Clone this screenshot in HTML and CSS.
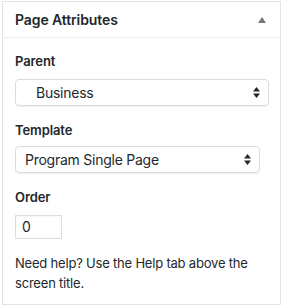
FILE: index.html
```html
<!DOCTYPE html>
<html>
<head>
<meta charset="utf-8">
<link rel="stylesheet" href="styles.css">
</head>
<body>
<div class="postbox">
  <div class="postbox-header">
    <h2 class="hndle">Page Attributes</h2>
    <span class="toggle"></span>
  </div>
  <div class="inside">
    <p class="label label-parent">Parent</p>
    <div class="select select-parent">
      <span class="value indent">Business</span>
      <svg class="arrows" width="7" height="11" viewBox="0 0 7 11"><path d="M3.5 0 L7 4.5 H0 Z M0 6.5 H7 L3.5 11 Z" fill="#23282d"/></svg>
    </div>
    <p class="label label-template">Template</p>
    <div class="select select-template">
      <span class="value">Program Single Page</span>
      <svg class="arrows" width="7" height="11" viewBox="0 0 7 11"><path d="M3.5 0 L7 4.5 H0 Z M0 6.5 H7 L3.5 11 Z" fill="#23282d"/></svg>
    </div>
    <p class="label label-order">Order</p>
    <div class="order">0</div>
    <p class="help">Need help? Use the Help tab above the screen title.</p>
  </div>
</div>
</body>
</html>
```
FILE: styles.css
```css
html, body {
  margin: 0;
  padding: 0;
  background: #fff;
}
body {
  font-family: Inter, "Liberation Sans", sans-serif;
  color: #23282d;
  font-size: 13px;
}
.postbox {
  margin: 1px 0 0 2px;
  width: 279px;
  height: 304px;
  box-sizing: border-box;
  border: 1px solid #e2e4e7;
  background: #fff;
}
.postbox-header {
  height: 35px;
  border-bottom: 1px solid #eeeeee;
  display: flex;
  align-items: center;
  justify-content: space-between;
  padding: 0 0 0 12px;
}
.hndle {
  margin: 0;
  font-size: 14px;
  font-weight: 600;
  letter-spacing: -0.1px;
}
.toggle {
  width: 0;
  height: 0;
  border-left: 4.5px solid transparent;
  border-right: 4.5px solid transparent;
  border-bottom: 6px solid #72777c;
  margin-right: 14px;
  margin-top: 1px;
}
.inside {
  padding: 0 12px;
}
.label {
  margin: 16px 0 10px;
  font-weight: 600;
  font-size: 13px;
  line-height: 16px;
  letter-spacing: -0.1px;
}
.label-parent { margin-top: 15px; }
.label-template { margin-bottom: 8px; }
.select {
  height: 27px;
  box-sizing: border-box;
  border: 1px solid #dcdcde;
  border-radius: 4px;
  box-shadow: 0 1px 1px rgba(0,0,0,0.06);
  display: flex;
  align-items: center;
  justify-content: space-between;
  padding: 0 8px 0 9px;
  font-size: 14px;
  letter-spacing: -0.25px;
}
.select-parent { width: 254px; }
.select-template { width: 245px; }
.value.indent { padding-left: 11px; }
.arrows { display: block; }
.order {
  width: 47px;
  height: 24px;
  box-sizing: border-box;
  border: 1px solid #dddddd;
  padding: 0 6px;
  font-size: 14px;
  line-height: 22px;
  box-shadow: inset 0 1px 2px rgba(0,0,0,0.04);
}
.help {
  margin: 14px 0 0;
  font-size: 13px;
  line-height: 20px;
  letter-spacing: -0.2px;
}
```
